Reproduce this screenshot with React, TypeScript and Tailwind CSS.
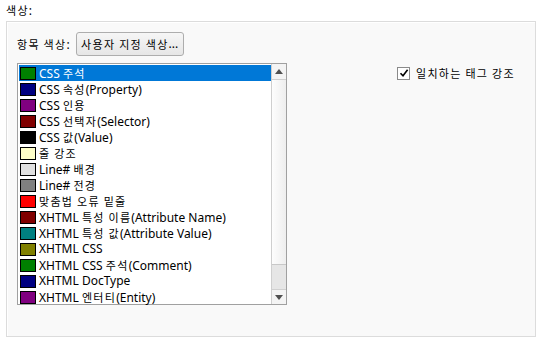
import React from "react";

const items: { label: string; color: string }[] = [
  { label: "CSS 주석", color: "#008000" },
  { label: "CSS 속성(Property)", color: "#000080" },
  { label: "CSS 인용", color: "#800080" },
  { label: "CSS 선택자(Selector)", color: "#800000" },
  { label: "CSS 값(Value)", color: "#000000" },
  { label: "줄 강조", color: "#ffffc8" },
  { label: "Line# 배경", color: "#e0e0e0" },
  { label: "Line# 전경", color: "#808080" },
  { label: "맞춤법 오류 밑줄", color: "#ff0000" },
  { label: "XHTML 특성 이름(Attribute Name)", color: "#800000" },
  { label: "XHTML 특성 값(Attribute Value)", color: "#008080" },
  { label: "XHTML CSS", color: "#808000" },
  { label: "XHTML CSS 주석(Comment)", color: "#008000" },
  { label: "XHTML DocType", color: "#000080" },
  { label: "XHTML 엔터티(Entity)", color: "#800080" },
];

function K({ text }: { text: string }) {
  const parts = text.split(/([\uAC00-\uD7A3]+(?: [\uAC00-\uD7A3]+)*)/);
  return (
    <>
      {parts.map((p, i) =>
        /[\uAC00-\uD7A3]/.test(p) ? (
          <span
            key={i}
            className="text-[11px] leading-[16px] tracking-[1.3px]"
            style={{ fontFamily: '"Noto Sans CJK KR", sans-serif' }}
          >
            {p}
          </span>
        ) : (
          <span key={i} className="leading-[16px]">
            {p}
          </span>
        )
      )}
    </>
  );
}

export default function App() {
  return (
    <div
      className="w-[540px] h-[339px] bg-white text-[12px] text-black overflow-hidden"
      style={{ fontFamily: '"Noto Sans", "Noto Sans CJK KR", sans-serif' }}
    >
      <div className="pl-[6px] pt-[2px] h-[21px] leading-[16px]">
        <K text="색상:" />
      </div>
      <div className="ml-[6px] w-[530px] h-[316px] border border-[#dcdcdc] bg-[#f9f9f9] shadow-[inset_1px_1px_0_#ffffff] pl-[10px] pt-[10px]">
        <div className="flex items-center h-[24px]">
          <span className="leading-[16px] mr-[6px] whitespace-nowrap">
            <K text="항목 색상:" />
          </span>
          <button className="h-[24px] w-[108px] border border-[#adadad] rounded-[3px] bg-gradient-to-b from-[#f6f6f6] to-[#e6e6e6] text-[12px] leading-[16px] flex items-center justify-center whitespace-nowrap">
            <K text="사용자 지정 색상" />
            ...
          </button>
        </div>
        <div className="flex mt-[7px]">
          <div className="w-[270px] h-[242px] border border-[#a0a0a0] bg-white flex">
            <div className="flex-1 flex flex-col pt-[1px] pl-[1px]">
              {items.map((it, i) => (
                <div
                  key={i}
                  className={
                    "h-[16px] leading-[16px] flex items-center whitespace-nowrap " +
                    (i === 0 ? "bg-[#0078d7] text-white" : "")
                  }
                >
                  <div
                    className="w-[16px] h-[13px] border border-black ml-[1px] mr-[3px] shrink-0"
                    style={{ backgroundColor: it.color }}
                  />
                  <span className="leading-[16px]">
                    <K text={it.label} />
                  </span>
                </div>
              ))}
            </div>
            <div className="w-[15px] flex flex-col border-l border-[#cfcfcf] bg-[#e6e6e6]">
              <div className="h-[16px] bg-[#f4f4f4] flex items-center justify-center border-b border-[#d0d0d0]">
                <svg width="8" height="5" viewBox="0 0 8 5">
                  <path d="M0 5 L4 0 L8 5 Z" fill="#505050" />
                </svg>
              </div>
              <div className="h-[185px] bg-gradient-to-r from-[#fdfdfd] to-[#eeeeee] border-b border-[#c8c8c8]" />
              <div className="flex-1" />
              <div className="h-[15px] bg-[#f4f4f4] flex items-center justify-center border-t border-[#d0d0d0]">
                <svg width="8" height="5" viewBox="0 0 8 5">
                  <path d="M0 0 L8 0 L4 5 Z" fill="#505050" />
                </svg>
              </div>
            </div>
          </div>
          <div className="ml-[110px] mt-[3px] flex items-center h-[14px]">
            <div className="w-[13px] h-[13px] border border-[#8a8a8a] bg-white flex items-center justify-center mr-[6px]">
              <svg width="10" height="10" viewBox="0 0 10 10">
                <path d="M1.5 5.2 L4 7.8 L8.6 1.8" stroke="#000" strokeWidth="1.6" fill="none" />
              </svg>
            </div>
            <span className="leading-[16px] whitespace-nowrap">
              <K text="일치하는 태그 강조" />
            </span>
          </div>
        </div>
      </div>
    </div>
  );
}
